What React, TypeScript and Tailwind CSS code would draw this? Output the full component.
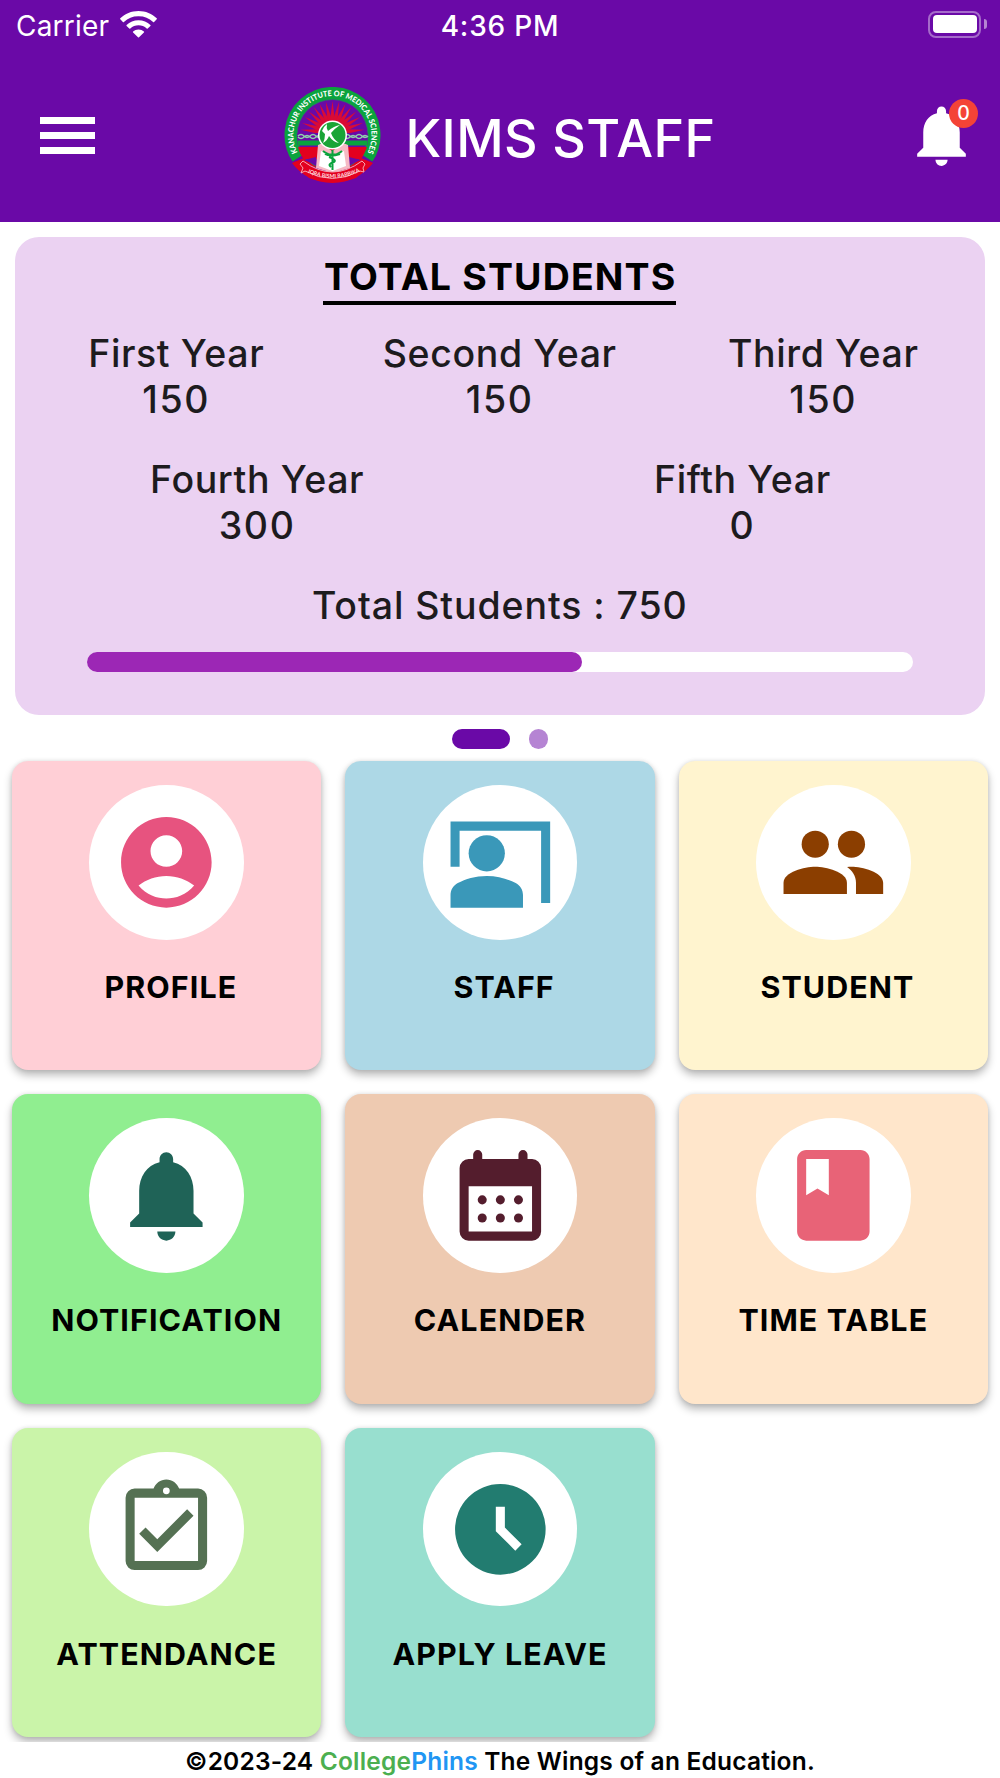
import { MdNotifications } from "react-icons/md";

interface YearCount {
  label: string;
  count: number;
}

interface MenuTile {
  label: string;
  background: string;
  color: string;
  icon: React.ReactNode;
}

const upperYears: YearCount[] = [
  { label: "First Year", count: 150 },
  { label: "Second Year", count: 150 },
  { label: "Third Year", count: 150 },
];

const lowerYears: YearCount[] = [
  { label: "Fourth Year", count: 300 },
  { label: "Fifth Year", count: 0 },
];

const tiles: MenuTile[] = [
  {
    label: " PROFILE",
    background: "bg-[#ffcfd6]",
    color: "text-[#e7537f]",
    icon: (
      <path d="M12 2C6.48 2 2 6.48 2 12s4.48 10 10 10 10-4.48 10-10S17.52 2 12 2zm0 4c1.93 0 3.5 1.57 3.5 3.5S13.93 13 12 13s-3.5-1.57-3.5-3.5S10.07 6 12 6zm0 14c-2.03 0-4.43-.82-6.14-2.88C7.55 15.8 9.68 15 12 15s4.45.8 6.14 2.12C16.43 19.18 14.03 20 12 20z" />
    ),
  },
  {
    label: " STAFF",
    background: "bg-[#add8e6]",
    color: "text-[#3a98b9]",
    icon: (
      <>
        <path d="M1 3h22v18h-2V5H3v8H1z" />
        <circle cx="9" cy="10" r="4" />
        <path d="M15.39 16.56C13.71 15.7 11.53 15 9 15s-4.71.7-6.39 1.56C1.61 17.07 1 18.1 1 19.22V22h16v-2.78c0-1.12-.61-2.15-1.61-2.66z" />
      </>
    ),
  },
  {
    label: " STUDENT",
    background: "bg-[#fff4cf]",
    color: "text-[#8b3e00]",
    icon: (
      <>
        <circle cx="8" cy="8" r="3" />
        <circle cx="16" cy="8" r="3" />
        <path d="M8 13c-2.33 0-7 1.17-7 3.5V19h14v-2.5c0-2.33-4.67-3.5-7-3.5z" />
        <path d="M16 13c-.29 0-.62.02-.97.05 1.16.84 1.97 1.97 1.97 3.45V19h6v-2.5c0-2.33-4.67-3.5-7-3.5z" />
      </>
    ),
  },
  {
    label: "NOTIFICATION",
    background: "bg-[#90ee90]",
    color: "text-[#1f6357]",
    icon: (
      <path d="M12 22c1.1 0 2-.9 2-2h-4c0 1.1.89 2 2 2zm6-6v-5c0-3.07-1.64-5.64-4.5-6.32V4c0-.83-.67-1.5-1.5-1.5s-1.5.67-1.5 1.5v.68C7.63 5.36 6 7.92 6 11v5l-2 2v1h16v-1l-2-2z" />
    ),
  },
  {
    label: "CALENDER",
    background: "bg-[#eecab1]",
    color: "text-[#541d2d]",
    icon: (
      <>
        <path
          fillRule="evenodd"
          d="M19 4h-1V3a1 1 0 0 0-2 0v1H8V3a1 1 0 0 0-2 0v1H5a2 2 0 0 0-2 2v14a2 2 0 0 0 2 2h14a2 2 0 0 0 2-2V6a2 2 0 0 0-2-2zM5 10h14v10H5z"
        />
        <circle cx="8" cy="13" r="1" />
        <circle cx="12" cy="13" r="1" />
        <circle cx="16" cy="13" r="1" />
        <circle cx="8" cy="17" r="1" />
        <circle cx="12" cy="17" r="1" />
        <circle cx="16" cy="17" r="1" />
      </>
    ),
  },
  {
    label: "TIME TABLE",
    background: "bg-[#ffe6cb]",
    color: "text-[#e86377]",
    icon: (
      <path d="M18 2H6c-1.1 0-2 .9-2 2v16c0 1.1.9 2 2 2h12c1.1 0 2-.9 2-2V4c0-1.1-.9-2-2-2zM6 4h5v8l-2.5-1.5L6 12V4z" />
    ),
  },
  {
    label: "ATTENDANCE",
    background: "bg-[#caf4a9]",
    color: "text-[#557153]",
    icon: (
      <>
        <path d="M18 9l-1.41-1.42L10 14.17l-2.59-2.58L6 13l4 4z" />
        <path
          fillRule="evenodd"
          d="M19 3h-4.18C14.4 1.84 13.3 1 12 1s-2.4.84-2.82 2H5a2 2 0 0 0-2 2v14a2 2 0 0 0 2 2h14a2 2 0 0 0 2-2V5a2 2 0 0 0-2-2zM12 2.75a.75.75 0 1 1 0 1.5.75.75 0 0 1 0-1.5zM5 5h14v14H5z"
        />
      </>
    ),
  },
  {
    label: "APPLY LEAVE",
    background: "bg-[#98dfcf]",
    color: "text-[#227c70]",
    icon: (
      <path
        fillRule="evenodd"
        d="M12 2a10 10 0 1 0 0 20 10 10 0 0 0 0-20zM15.3 16.7L11 12.4V7h2v4.6l3.7 3.7z"
      />
    ),
  },
];

const rays = Array.from({ length: 17 }, (_, i) => -96 + i * 12);

const CollegeLogo: React.FC = () => (
  <svg viewBox="0 0 97 96" className="h-24 w-[97px] shrink-0">
    <defs>
      <path id="ring" d="M15 68A39 39 0 1 1 82 68" />
      <path id="ribbon" d="M20 84Q48.500 98 77 84" />
    </defs>
    {/* green ring and its red foot */}
    <path d="M14 71A41.500 41.500 0 1 1 83 71" fill="none" stroke="#0ba33d" strokeWidth="13" />
    <path d="M8 76L20 71Q48.500 92 77 71L89 76Q74 95 48.500 96Q22 95 8 76z" fill="#e3001f" />
    <circle cx="48.500" cy="48" r="35.500" fill="#6a09a7" />
    <circle cx="48.500" cy="48" r="35.500" fill="none" stroke="#2a7a68" strokeWidth="0.800" />
    {rays.map((angle) => (
      <path
        key={angle}
        d="M46 34L48.500 14L51 34L51 46H46z"
        fill="#d90b35"
        transform={`rotate(${angle} 48.5 46)`}
      />
    ))}
    <path d="M13.500 46h70v12h-70z" fill="#6a09a7" />
    <path
      d="M14 49q3-3 6 0t6 0 6 0 6 0M60 49q3-3 6 0t6 0 6 0 6 0M14 50q3 3 6 0t6 0 6 0 6 0M60 50q3 3 6 0t6 0 6 0 6 0"
      fill="none"
      stroke="#8fd0ad"
      strokeWidth="1.500"
    />
    <path d="M13.500 53.500h70v5h-70z" fill="#0ba33d" />
    <path d="M14 60h69q-3 8-6 12H20q-4-4-6-12z" fill="#e3001f" />
    <path d="M20 73l12-3v8zM77 73l-12-3v8z" fill="#6a09a7" />
    <path d="M17 77L31 81L48.500 85L66 81L80 77" fill="none" stroke="#6a09a7" strokeWidth="1.500" />
    {/* hands holding the book */}
    <path d="M34 58q6-4 8 2l6 4 7-4q3-6 9-2l2 23-17 5-17-5z" fill="#f6b9c4" />
    <path d="M37 64l11.500 4L60 64l2 15-13.500 5L35 79z" fill="#fff" />
    <path
      d="M48.500 63v20M39 64q7 5 9.500 3 3 2 9.500-3M41 67q5 3 15 0M45 70q8 3 5 5-7 2-3 5"
      fill="none"
      stroke="#0ba33d"
      strokeWidth="2"
    />
    {/* globe */}
    <circle cx="48.500" cy="48" r="14.500" fill="#fff" />
    <circle cx="48.500" cy="48" r="13" fill="#19a436" />
    <path
      d="M38 44q2-5 5-7-1 4 1 7 6-5 12-6-6 4-9 8 2 6 8 10-6-1-10-7-2 5-6 7 2-4 2-9z"
      fill="#fff"
    />
    {/* motto ribbon */}
    <path
      d="M16 77l3-3Q48.500 96 78 74l3 3-2 4 1 4-4-1Q48.500 99 21 84l-4 2 2-5z"
      fill="#e3001f"
      stroke="#f6b9c4"
      strokeWidth="0.900"
    />
    <path d="M21 87Q48.500 102 76 87L72 91Q48.500 99 25 91z" fill="#e3001f" />
    <text
      className="font-['Lato'] text-[7.8px] font-black"
      fill="#fff"
      textLength="158"
      lengthAdjust="spacingAndGlyphs"
    >
      <textPath href="#ring" startOffset="3">
        KANACHUR INSTITUTE OF MEDICAL SCIENCES
      </textPath>
    </text>
    <text
      className="font-['Lato'] text-[5.6px] font-bold"
      fill="#ffd9de"
      textLength="54"
      lengthAdjust="spacingAndGlyphs"
    >
      <textPath href="#ribbon" startOffset="4">
        IQRA BISMI RABBIKA
      </textPath>
    </text>
  </svg>
);

const StatusBar: React.FC = () => (
  <div className="grid h-12 grid-cols-3 items-center">
    <div className="flex items-center gap-[11px] pl-4">
      <span className="pt-[3px] text-[28px] leading-9 tracking-[0.2px]">Carrier</span>
      <svg viewBox="0 0 37 27" className="h-[27px] w-[37px]" fill="currentColor">
        <path d="M18.500 0C25.600 0 32 2.800 36.700 7.300q.5.5 0 1l-2.600 2.600q-.5.5-1 0A21 21 0 0 0 18.500 5.300 21 21 0 0 0 3.900 10.900q-.5.5-1 0L.300 8.300q-.5-.5 0-1C5 2.800 11.400 0 18.500 0z" />
        <path d="M18.500 9.300c4.600 0 8.800 1.700 11.900 4.600q.5.5 0 1l-2.700 2.600q-.5.5-1 0a12.200 12.200 0 0 0-16.400 0q-.5.5-1 0l-2.700-2.600q-.5-.5 0-1C9.700 11 13.900 9.300 18.500 9.300z" />
        <path d="M18.500 18.400c2.100 0 4 .700 5.400 2q.6.500 0 1l-4.900 4.900q-.5.500-1 0l-4.900-4.900q-.6-.5 0-1c1.400-1.300 3.300-2 5.400-2z" />
      </svg>
    </div>
    <span className="pt-[3px] text-center text-[28px] leading-9 font-[550] tracking-[0.8px]">
      4:36 PM
    </span>
    <div className="flex items-center justify-end gap-[3px] pr-[13px]">
      <div className="h-[27px] w-[53px] rounded-[8px] border-2 border-white/40 p-[2.5px]">
        <div className="h-full rounded-[4px] bg-white" />
      </div>
      <div className="h-[10px] w-[3px] rounded-r-full bg-white/50" />
    </div>
  </div>
);

const Header: React.FC = () => (
  <header className="h-[222px] bg-[#6a09a7] text-white">
    <StatusBar />
    <div className="flex h-[174px] items-center justify-between pr-[22px] pl-10">
      <button className="flex w-[55px] flex-col gap-2 pt-px">
        <span className="h-[7px] bg-white" />
        <span className="h-[7px] bg-white" />
        <span className="h-[7px] bg-white" />
      </button>
      <div className="flex items-center gap-6">
        <CollegeLogo />
        <h1 className="pt-[8px] text-[52px] leading-[60px] font-[520] tracking-[0.4px]">
          KIMS STAFF
        </h1>
      </div>
      <button className="relative">
        <MdNotifications className="size-[73px]" />
        <span className="absolute top-0 right-0 flex size-[29px] items-center justify-center rounded-full bg-[#f44336] pt-[2px] text-[19.500px] leading-none font-medium">
          0
        </span>
      </button>
    </div>
  </header>
);

const YearColumn: React.FC<YearCount> = ({ label, count }) => (
  <div className="flex flex-col items-center">
    <span>{label}</span>
    <span className="tracking-[1.6px]">{count}</span>
  </div>
);

const StudentSummary: React.FC = () => (
  <section className="mr-[15px] ml-[14.5px] mt-[15px] flex h-[478px] flex-col rounded-[24px] bg-[#ebd2f2] pt-[17px] text-[37.5px] leading-[46px] font-[450] tracking-[0.6px] text-[#1d1b1e]">
    <h2 className="h-[51px] self-center border-b-4 border-black pl-px font-[650] tracking-[1.15px] text-black">
      TOTAL STUDENTS
    </h2>
    <div className="mt-[26px] grid grid-cols-3">
      {upperYears.map((year) => (
        <YearColumn key={year.label} {...year} />
      ))}
    </div>
    <div className="mt-[34px] grid grid-cols-2">
      {lowerYears.map((year) => (
        <YearColumn key={year.label} {...year} />
      ))}
    </div>
    <p className="mt-[34px] text-center tracking-[0.9px]">Total Students : 750</p>
    <div className="mx-[72px] mt-[23px] h-[19.5px] rounded-full bg-white">
      <div className="h-full w-[60%] rounded-full bg-[#9c27b5]" />
    </div>
  </section>
);

const Tile: React.FC<MenuTile> = ({ label, background, color, icon }) => (
  <div
    className={`flex h-[309.2px] flex-col items-center rounded-[16px] pt-6 shadow-[0_5px_8px_rgba(0,0,0,0.28),0_0_4px_rgba(0,0,0,0.1)] ${background}`}
  >
    <div className="flex size-[154.6px] items-center justify-center rounded-full bg-white">
      <svg viewBox="0 0 24 24" className={`size-[108.7px] ${color}`} fill="currentColor">
        {icon}
      </svg>
    </div>
    <span className="mt-[29.2px] text-[30.4px] leading-9 font-[650] tracking-[1.1px] whitespace-pre">
      {label}
    </span>
  </div>
);

export default function App() {
  return (
    <div className="flex h-[1778px] w-[1000px] flex-col overflow-hidden bg-white font-['Inter',sans-serif] text-black">
      <Header />
      <StudentSummary />
      <div className="flex h-[46.2px] shrink-0 justify-center gap-[19px] pt-[14px]">
        <span className="h-[19.5px] w-[58px] rounded-full bg-[#6a09a7]" />
        <span className="size-[19.5px] rounded-full bg-[#b584d3]" />
      </div>
      <main className="-mt-1 grid h-[984.8px] shrink-0 grid-cols-3 content-start gap-[24.1px] overflow-hidden px-[12.1px] pt-1">
        {tiles.map((tile) => (
          <Tile key={tile.label} {...tile} />
        ))}
      </main>
      <footer className="pt-[2px] text-center text-[24.5px] leading-[34px] font-semibold tracking-[0.2px]">
        ©2023-24 <span className="text-[#4caf50]">College</span>
        <span className="text-[#2196f3]">Phins</span> The Wings of an Education.
      </footer>
    </div>
  );
}
